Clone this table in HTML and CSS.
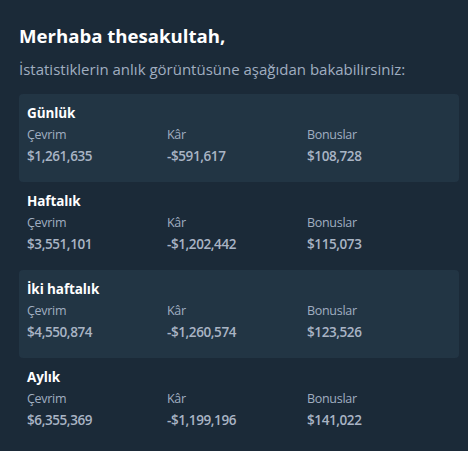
FILE: index.html
```html
<!DOCTYPE html>
<html lang="tr">
<head>
<meta charset="utf-8">
<link rel="stylesheet" href="styles.css">
</head>
<body>
<div class="page">
  <h1 class="title">Merhaba thesakultah,</h1>
  <p class="subtitle">İstatistiklerin anlık görüntüsüne aşağıdan bakabilirsiniz:</p>
  <div class="list">
    <section class="period shaded">
      <h2 class="period-name">Günlük</h2>
      <div class="stats">
        <div class="stat"><div class="label">Çevrim</div><div class="value">$1,261,635</div></div>
        <div class="stat"><div class="label">Kâr</div><div class="value">-$591,617</div></div>
        <div class="stat"><div class="label">Bonuslar</div><div class="value">$108,728</div></div>
      </div>
    </section>
    <section class="period">
      <h2 class="period-name">Haftalık</h2>
      <div class="stats">
        <div class="stat"><div class="label">Çevrim</div><div class="value">$3,551,101</div></div>
        <div class="stat"><div class="label">Kâr</div><div class="value">-$1,202,442</div></div>
        <div class="stat"><div class="label">Bonuslar</div><div class="value">$115,073</div></div>
      </div>
    </section>
    <section class="period shaded">
      <h2 class="period-name">İki haftalık</h2>
      <div class="stats">
        <div class="stat"><div class="label">Çevrim</div><div class="value">$4,550,874</div></div>
        <div class="stat"><div class="label">Kâr</div><div class="value">-$1,260,574</div></div>
        <div class="stat"><div class="label">Bonuslar</div><div class="value">$123,526</div></div>
      </div>
    </section>
    <section class="period">
      <h2 class="period-name">Aylık</h2>
      <div class="stats">
        <div class="stat"><div class="label">Çevrim</div><div class="value">$6,355,369</div></div>
        <div class="stat"><div class="label">Kâr</div><div class="value">-$1,199,196</div></div>
        <div class="stat"><div class="label">Bonuslar</div><div class="value">$141,022</div></div>
      </div>
    </section>
  </div>
</div>
</body>
</html>
```

FILE: styles.css
```css
html, body {
  margin: 0;
  padding: 0;
  background: #1b2a38;
}
body {
  font-family: "Open Sans", "Noto Sans", sans-serif;
  color: #a0aec0;
}
.page {
  padding: 23px 9px 0 19px;
}
.title {
  margin: 0;
  font-size: 18.6px;
  line-height: 26px;
  font-weight: 700;
  color: #ffffff;
}
.subtitle {
  margin: 9px 0 0;
  font-size: 15px;
  line-height: 22px;
  color: #a0aec0;
}
.list {
  margin-top: 14px;
  display: flex;
  flex-direction: column;
}
.period {
  height: 88px;
  box-sizing: border-box;
  padding: 9px 8px 8px;
  border-radius: 4px;
}
.period.shaded {
  background: #223544;
}
.period-name {
  margin: 0;
  font-size: 13.5px;
  line-height: 20px;
  font-weight: 700;
  letter-spacing: -0.1px;
  color: #ffffff;
}
.stats {
  display: grid;
  grid-template-columns: repeat(3, 140px);
  margin-top: 2px;
}
.label {
  font-size: 12.5px;
  line-height: 20px;
  letter-spacing: -0.3px;
}
.value {
  margin-top: 1px;
  font-size: 13.5px;
  line-height: 20px;
  font-weight: 600;
  letter-spacing: -0.4px;
  color: #a9b4c4;
}
```
